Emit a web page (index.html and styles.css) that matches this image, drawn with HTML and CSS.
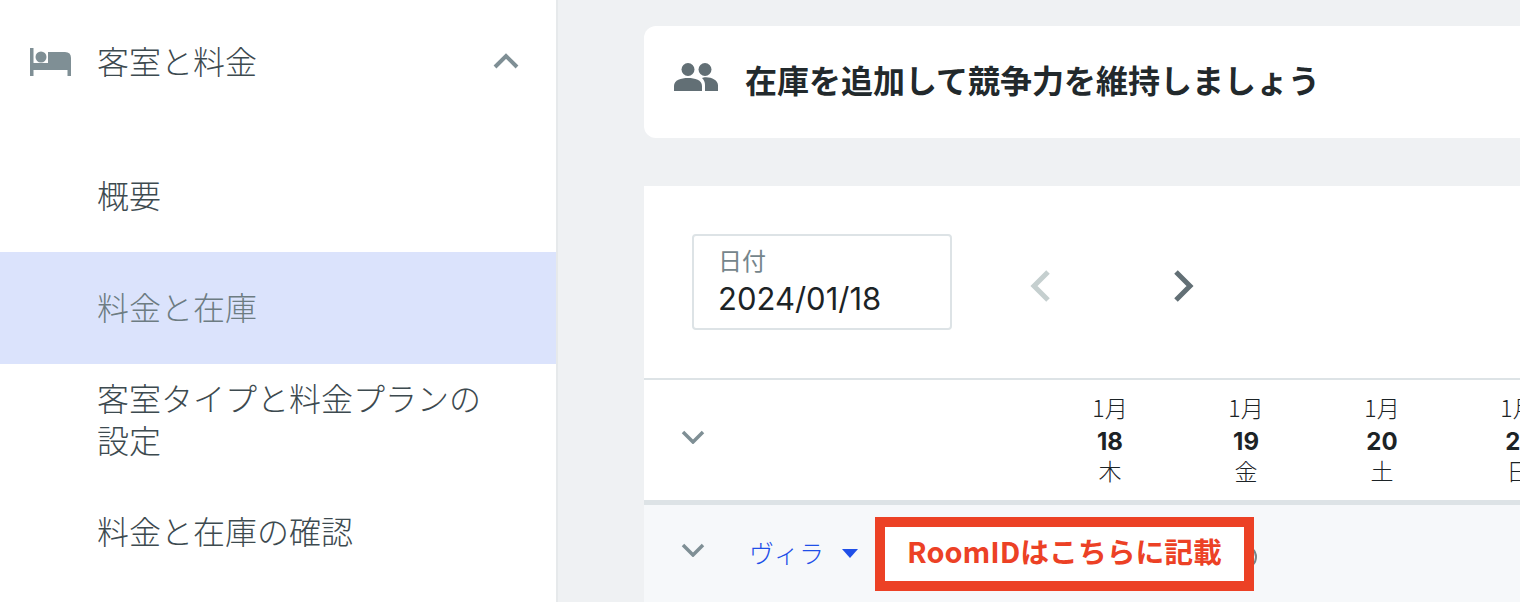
FILE: index.html
```html
<!DOCTYPE html>
<html lang="ja">
<head>
    <meta charset="UTF-8">
    <title>料金と在庫</title>
    <link rel="stylesheet" href="styles.css">
</head>
<body>
    <div class="page">
        <nav class="sidebar">
            <div class="nav-head">
                <svg class="bed-icon" viewBox="0 0 41 28"><path d="M0 0h3.500v15H18V4h17q6 0 6 6v18h-3.500v-6h-34v6H0z" fill="#7f8f95"/><circle cx="11" cy="9" r="5.500" fill="#7f8f95"/></svg>
                <span class="nav-title">客室と料金</span>
                <svg class="chevron-up" viewBox="0 0 26 16"><path d="M2 14 13 3l11 11" fill="none" stroke="#7f8f95" stroke-width="4"/></svg>
            </div>
            <a class="nav-item">概要</a>
            <a class="nav-item active">料金と在庫</a>
            <a class="nav-item">客室タイプと料金プランの<br>設定</a>
            <a class="nav-item">料金と在庫の確認</a>
        </nav>

        <main class="content">
            <section class="notice">
                <svg class="people-icon" viewBox="0 0 44 28"><circle cx="14" cy="6.500" r="6.500" fill="#626f75"/><circle cx="31" cy="6.500" r="6.500" fill="#626f75"/><path d="M0 28v-5c0-6 7-8 14-8s14 2 14 8v5z" fill="#626f75"/><path d="M31 28v-6c0-3-1-5-3-7 1-.500 2-.700 4-.700 6 0 12 3 12 8v5.700z" fill="#626f75"/></svg>
                <h1>在庫を追加して競争力を維持しましょう</h1>
            </section>

            <section class="panel">
                <div class="toolbar">
                    <div class="date-field">
                        <label>日付</label>
                        <div class="date-value">2024/01/18</div>
                    </div>
                    <svg class="arrow" viewBox="0 0 22 34"><path d="M19 3 5 17l14 14" fill="none" stroke="#c5cfcf" stroke-width="5"/></svg>
                    <svg class="arrow next" viewBox="0 0 22 34"><path d="M3 3l14 14L3 31" fill="none" stroke="#626f75" stroke-width="5"/></svg>
                </div>

                <div class="cal-head">
                    <svg class="chevron-down" viewBox="0 0 24 14"><path d="M2 2l10 10L22 2" fill="none" stroke="#7f8f95" stroke-width="3.500"/></svg>
                    <div class="days">
                        <div class="day">1月<b>18</b>木</div>
                        <div class="day">1月<b>19</b>金</div>
                        <div class="day">1月<b>20</b>土</div>
                        <div class="day">1月<b>21</b>日</div>
                    </div>
                </div>

                <div class="room-row">
                    <svg class="chevron-down" viewBox="0 0 24 14"><path d="M2 2l10 10L22 2" fill="none" stroke="#7f8f95" stroke-width="3.500"/></svg>
                    <span class="room-name">ヴィラ</span>
                    <span class="caret"></span>
                    <span class="info-dot"></span>
                    <div class="callout">RoomIDはこちらに記載</div>
                </div>
            </section>
        </main>
    </div>
</body>
</html>
```

FILE: styles.css
```css
html, body {
    margin: 0;
    height: 100%;
    overflow: hidden;
}
body {
    font-family: "Noto Sans CJK JP", "Noto Sans", sans-serif;
    background-color: #eff1f3;
    color: #1c2326;
}
.page {
    display: flex;
    height: 602px;
}
.sidebar {
    flex: 0 0 556px;
    height: 602px;
    background: white;
    border-right: 2px solid #e6e9eb;
    padding-top: 6px;
    color: #3d4a4f;
    font-size: 32px;
    font-weight: 300;
    overflow: hidden;
}
.nav-head {
    display: flex;
    align-items: center;
    height: 112px;
    margin-bottom: 22px;
    padding-left: 30px;
}
.bed-icon {
    flex: none;
    width: 41px;
    height: 28px;
}
.nav-title {
    margin-left: 26px;
    margin-bottom: 4px;
    line-height: 1;
}
.chevron-up {
    flex: none;
    width: 26px;
    height: 16px;
    margin-left: auto;
    margin-right: 37px;
    margin-bottom: 2px;
}
.nav-item {
    display: flex;
    align-items: center;
    height: 112px;
    box-sizing: border-box;
    padding: 0 0 4px 97px;
    line-height: 42px;
}
.nav-item.active {
    background: #dbe3fc;
    color: #6d7c82;
}
.content {
    flex: 1;
    min-width: 0;
    padding: 26px 0 0 86px;
}
.notice {
    display: flex;
    align-items: center;
    height: 112px;
    background: white;
    border-radius: 12px 0 0 12px;
    padding-left: 30px;
}
.people-icon {
    flex: none;
    width: 44px;
    height: 28px;
    margin-bottom: 10px;
}
.notice h1 {
    margin: 0 0 6px 27px;
    font-size: 32px;
    font-weight: 700;
    line-height: 1;
    color: #22292c;
}
.panel {
    margin-top: 48px;
    background: white;
}
.toolbar {
    display: flex;
    align-items: center;
    height: 192px;
    padding-left: 48px;
}
.date-field {
    width: 260px;
    height: 96px;
    box-sizing: border-box;
    border: 2px solid #dde3e6;
    border-radius: 4px;
    padding: 8px 0 0 25px;
}
.date-field label {
    display: block;
    margin-left: -1px;
    font-size: 24px;
    line-height: 32px;
    color: #75858b;
}
.date-value {
    margin: 3px 0 0 -1px;
    font-family: Inter, sans-serif;
    font-size: 31px;
    line-height: 40px;
    color: #1c2326;
}
.arrow {
    flex: none;
    width: 22px;
    height: 34px;
    margin: 8px 0 0 77px;
}
.arrow.next {
    margin-left: 122px;
}
.cal-head {
    display: flex;
    align-items: center;
    height: 120px;
    border-top: 2px solid #dde3e6;
    border-bottom: 5px solid #dde3e6;
    padding-left: 37px;
    overflow: hidden;
}
.chevron-down {
    flex: none;
    width: 24px;
    height: 14px;
    margin-top: -7px;
}
.days {
    display: flex;
    flex: none;
    margin-top: -3px;
    margin-left: 337px;
}
.day {
    flex: 0 0 136px;
    text-align: center;
    font-size: 23px;
    font-weight: 300;
    line-height: 32px;
}
.day b {
    display: block;
    font-family: Inter, sans-serif;
    font-size: 24px;
    font-weight: 700;
    padding-top: 3px;
    margin-bottom: -4px;
}
.room-row {
    position: relative;
    display: flex;
    align-items: center;
    height: 97px;
    background: #f6f8fa;
    padding-left: 37px;
}
.room-name {
    margin: 0 0 4px 44px;
    font-size: 25px;
    font-weight: 300;
    color: #1f4fe8;
}
.caret {
    margin-left: 18px;
    border-left: 8px solid transparent;
    border-right: 8px solid transparent;
    border-top: 9px solid #1f4fe8;
}
.info-dot {
    position: absolute;
    left: 589px;
    top: 40px;
    width: 20px;
    height: 20px;
    border: 2px solid #75858b;
    border-radius: 50%;
}
.callout {
    position: absolute;
    left: 231px;
    top: 12px;
    width: 379px;
    height: 74px;
    box-sizing: border-box;
    border: 10px solid #ec4125;
    background: white;
    color: #ec4125;
    font-size: 28.800px;
    font-weight: 700;
    text-align: center;
    line-height: 48px;
}
```
